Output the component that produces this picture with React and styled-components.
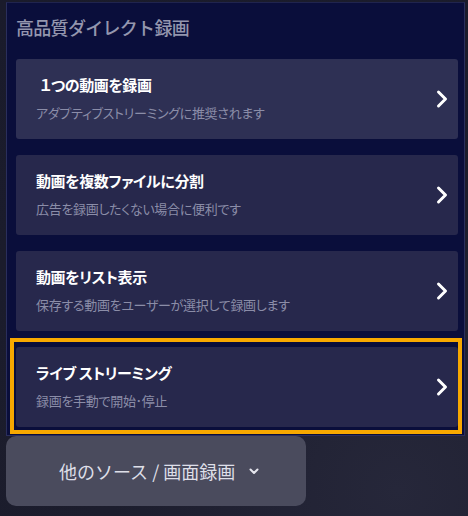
import React from "react"
import styled, { createGlobalStyle } from "styled-components"

const GlobalStyle = createGlobalStyle`
  html, body {
    margin: 0;
    padding: 0;
  }
  body {
    width: 468px;
    height: 516px;
    overflow: hidden;
    background: radial-gradient(circle at 85% 95%, #26273a 0%, #1c1d2d 45%, #1a1b2b 100%);
    font-family: "Noto Sans CJK JP", "Noto Sans", sans-serif;
  }
`

const Page = styled.div`
  padding: 2px 0 0 6px;
`

const Panel = styled.section`
  box-sizing: border-box;
  width: 459px;
  height: 434px;
  background: #0a0e3b;
  border: 1px solid #2a2e5c;
  border-top-color: #20244e;
  padding: 12px 6px 7px 9px;
  display: flex;
  flex-direction: column;
`

const Heading = styled.h2`
  margin: 0 0 20px;
  font-size: 18px;
  line-height: 24px;
  font-weight: 500;
  color: #9496ae;
  letter-spacing: -0.7px;
`

const List = styled.div`
  display: flex;
  flex-direction: column;
  gap: 16px;
`

const Card = styled.div`
  position: relative;
  box-sizing: border-box;
  height: 80px;
  border-radius: 3px;
  background: ${({ $hover }) => ($hover ? "#2e3054" : "#27284c")};
  padding: 16px 10px 0 20px;
  display: flex;
  justify-content: space-between;

  ${({ $active }) =>
    $active &&
    `
    &::after {
      content: "";
      position: absolute;
      left: -6px;
      top: -9px;
      right: -4px;
      bottom: -7px;
      border: 4px solid #f7a800;
      pointer-events: none;
    }
  `}
`

const Texts = styled.div`
  display: flex;
  flex-direction: column;
  gap: 9px;
  font-feature-settings: "palt";
`

const Title = styled.div`
  font-size: 15px;
  line-height: 20px;
  font-weight: 700;
  color: #ffffff;
  letter-spacing: -0.4px;
`

const Lead = styled.span`
  display: inline-block;
  width: 4px;
`

const Sub = styled.div`
  font-size: 13px;
  line-height: 18px;
  color: #8b8da8;
  letter-spacing: -0.3px;
`

const Arrow = styled.svg`
  align-self: center;
  margin-top: -16px;
  flex: none;
`

const SourceButton = styled.button`
  box-sizing: border-box;
  width: 300px;
  height: 70px;
  border: none;
  border-radius: 10px;
  background: #4a4b5d;
  color: #dedfe8;
  font-family: inherit;
  font-size: 18px;
  padding: 0 0 0 53px;
  display: flex;
  align-items: center;
  gap: 14px;
  cursor: pointer;
`

const items = [
  { title: "１つの動画を録画", sub: "アダプティブストリーミングに推奨されます", hover: true, lead: true },
  { title: "動画を複数ファイルに分割", sub: "広告を録画したくない場合に便利です" },
  { title: "動画をリスト表示", sub: "保存する動画をユーザーが選択して録画します" },
  { title: "ライブ ストリーミング", sub: "録画を手動で開始･停止", active: true },
]

const Chevron = () => (
  <Arrow width="12" height="20" viewBox="0 0 12 20">
    <polyline
      points="2.5,3 9.5,10 2.5,17"
      fill="none"
      stroke="#ffffff"
      strokeWidth="3"
      strokeLinecap="round"
      strokeLinejoin="round"
    />
  </Arrow>
)

const App = () => {
  return (
    <>
      <GlobalStyle />
      <Page>
        <Panel>
          <Heading>高品質ダイレクト録画</Heading>
          <List>
            {items.map(el => (
              <Card key={el.title} $hover={el.hover} $active={el.active}>
                <Texts>
                  <Title>
                    {el.lead && <Lead />}
                    {el.title}
                  </Title>
                  <Sub>{el.sub}</Sub>
                </Texts>
                <Chevron />
              </Card>
            ))}
          </List>
        </Panel>
        <SourceButton>
          他のソース / 画面録画
          <svg width="10" height="7" viewBox="0 0 10 7">
            <polyline
              points="1.5,1.5 5,5 8.5,1.5"
              fill="none"
              stroke="#e6e6ee"
              strokeWidth="2"
              strokeLinecap="round"
              strokeLinejoin="round"
            />
          </svg>
        </SourceButton>
      </Page>
    </>
  )
}

export default App
